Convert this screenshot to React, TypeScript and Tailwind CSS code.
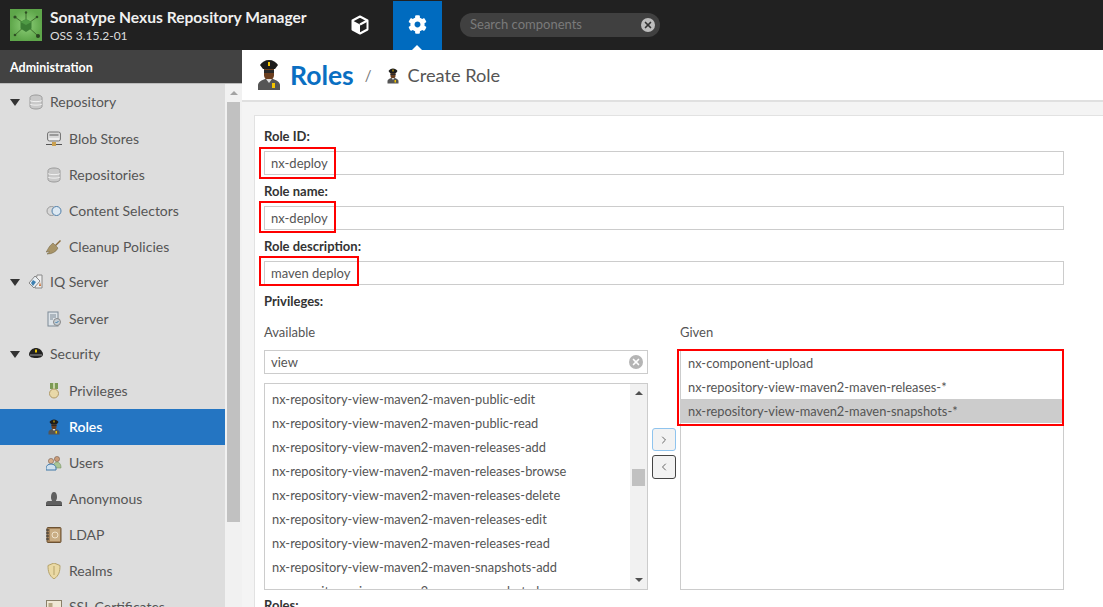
import React from "react";
import { ChevronLeft, ChevronRight, X } from "lucide-react";
import { FaCog } from "react-icons/fa";

const Db = ({ s = 16 }: { s?: number }) => (
  <svg width={s} height={s} viewBox="0 0 16 16">
    <path d="M2 3.500C2 2 5 1 8 1s6 1 6 2.500v9C14 14 11 15 8 15s-6-1-6-2.500z" fill="#c9c9c9" stroke="#9a9a9a" />
    <path d="M2 6.500C3 8 13 8 14 6.500M2 10C3 11.500 13 11.500 14 10" fill="none" stroke="#f2f2f2" />
  </svg>
);
const Officer = ({ s = 16 }: { s?: number }) => (
  <svg width={s} height={s} viewBox="0 0 24 32">
    <path d="M1 31v-5c0-3 4-5 7-6h8c3 1 7 3 7 6v5z" fill="#555" />
    <path d="M7 10h10v6c0 3-2 5-5 5s-5-2-5-5z" fill="#6b3f1f" />
    <path d="M7 11h10v3H7z" fill="#2a2a2a" />
    <path d="M3 6c2-3 5-5 9-5s7 2 9 5l-3 4H6z" fill="#1c1c1c" />
    <rect x="11" y="3" width="2" height="4" fill="#f2c400" />
    <rect x="15" y="24" width="3" height="5" fill="#f2c400" />
    <path d="M9 20h6l-3 4z" fill="#ddd" />
  </svg>
);
const Blob = () => (
  <svg width="16" height="16" viewBox="0 0 16 16">
    <rect x="1.500" y="1" width="13" height="9" rx="2" fill="#d8d8d8" stroke="#777" />
    <rect x="3.500" y="3" width="9" height="2" fill="#999" />
    <rect x="3" y="7" width="10" height="2" fill="#eee" />
    <path d="M0 13.500h16" stroke="#555" />
    <rect x="6" y="11" width="4" height="4" fill="#c9a050" />
  </svg>
);
const Selectors = () => (
  <svg width="16" height="16" viewBox="0 0 16 16">
    <circle cx="5.500" cy="8" r="4.500" fill="#d8d8d8" stroke="#999" />
    <circle cx="10.500" cy="8" r="4.500" fill="#dce8f2" stroke="#4f7ea8" />
  </svg>
);
const Broom = () => (
  <svg width="16" height="16" viewBox="0 0 16 16">
    <path d="M9 6l5-5 1 1-5 5z" fill="#8a6a3a" />
    <path d="M7 4l5 5c-2 4-6 6-11 6 2-1 2-2 2-3-1 1-2 1-3 1 2-2 2-5 7-9z" fill="#a89468" stroke="#6d6040" strokeWidth=".5" />
  </svg>
);
const Tags = () => (
  <svg width="16" height="16" viewBox="0 0 16 16">
    <path d="M9 1h5v13H7z" fill="#eee" stroke="#888" />
    <path d="M7 2l5 5-6 7-5-5z" fill="#e8eef2" stroke="#888" />
    <path d="M5 6l3 2-3 4-2-3z" fill="#3d7fb0" />
    <path d="M12 8l1 4h-2z" fill="#c86a2a" />
  </svg>
);
const ServerI = () => (
  <svg width="16" height="16" viewBox="0 0 16 16">
    <rect x="2" y="1" width="10" height="14" fill="#dde3e8" stroke="#7d8a96" />
    <path d="M4 4h6M4 6h6M4 8h3" stroke="#7d8a96" />
    <circle cx="11" cy="11" r="3.500" fill="#c5cdd3" stroke="#888" />
    <path d="M9.500 11l1 1 2-2" stroke="#3c7fb0" fill="none" />
  </svg>
);
const Hat = () => (
  <svg width="16" height="16" viewBox="0 0 16 16">
    <path d="M1 8c1-4 4-6 7-6s6 2 7 6c0 3-3 4-7 4s-7-1-7-4z" fill="#222" />
    <path d="M2 9h12" stroke="#999" />
    <rect x="7" y="3.500" width="2" height="3" fill="#e8c400" />
  </svg>
);
const Medal = () => (
  <svg width="16" height="16" viewBox="0 0 16 16">
    <rect x="4" y="0" width="8" height="6" fill="#7c9a55" />
    <rect x="7" y="0" width="2" height="6" fill="#c7d4a8" />
    <circle cx="8" cy="10.500" r="4.500" fill="#e8d8a8" stroke="#b09a68" />
  </svg>
);
const Users = () => (
  <svg width="16" height="16" viewBox="0 0 16 16">
    <circle cx="11" cy="4" r="2.600" fill="#c99b78" stroke="#6a5040" strokeWidth=".5" />
    <path d="M7 12c0-3 2-5 4-5s4 2 4 5v1H7z" fill="#a9c494" stroke="#6c8858" strokeWidth=".5" />
    <circle cx="5" cy="6" r="2.600" fill="#d6ad8b" stroke="#6a5040" strokeWidth=".5" />
    <path d="M0 15v-2c0-2 2-4 5-4s5 2 5 4v2z" fill="#cfe0ee" stroke="#3f78a8" />
  </svg>
);
const Anon = () => (
  <svg width="16" height="16" viewBox="0 0 16 16">
    <path d="M5 6c0-3 1-5 3-5s3 2 3 5-1 3-1 4h4c1 0 2 1 2 2v2H0v-2c0-1 1-2 2-2h4c0-1-1-1-1-4z" fill="#5f5f5f" />
    <rect x="0" y="14" width="16" height="1" fill="#444" />
  </svg>
);
const Book = () => (
  <svg width="16" height="16" viewBox="0 0 16 16">
    <rect x="1" y="0.500" width="14" height="15" rx="1" fill="#a5835a" stroke="#6c5233" />
    <rect x="4" y="2" width="10" height="12" fill="#c9ad84" />
    <circle cx="9" cy="8" r="3" fill="none" stroke="#f0e4cc" />
    <path d="M0 3h3M0 6h3M0 9h3M0 12h3" stroke="#333" />
  </svg>
);
const Shield = () => (
  <svg width="16" height="16" viewBox="0 0 16 16">
    <path d="M8 0l6 2.500c0 6-1 10-6 13.500C3 12.500 2 8.500 2 2.500z" fill="#ead9a4" stroke="#b5a26a" />
    <path d="M8 3v9" stroke="#b5a26a" />
  </svg>
);
const Cert = () => (
  <svg width="16" height="16" viewBox="0 0 16 16">
    <rect x="0.500" y="1.500" width="15" height="12" fill="#efe8d5" stroke="#8b8069" />
    <rect x="2.500" y="4" width="4" height="4" fill="#b7a884" />
  </svg>
);
const Logo = () => (
  <svg width="32" height="32" viewBox="0 0 32 32" className="shrink-0">
    <defs>
      <radialGradient id="lg">
        <stop offset="0" stopColor="#8fd07a" />
        <stop offset="1" stopColor="#5ea64a" />
      </radialGradient>
    </defs>
    <rect width="32" height="32" fill="url(#lg)" />
    <path d="M16 16L5 8M16 16L27 8M16 16L5 26M16 16L27 26M16 16V4" stroke="#3f6f2e" strokeWidth="1" />
    <circle cx="5" cy="8" r="1.600" fill="#2f4f24" />
    <circle cx="27" cy="8" r="1.300" fill="#2f4f24" />
    <circle cx="5" cy="26" r="1.300" fill="#2f4f24" />
    <circle cx="28" cy="27" r="2" fill="#2a4420" />
    <circle cx="16" cy="3.500" r="1.200" fill="#2f4f24" />
    <path d="M16 10l5.500 3v6.500L16 23l-5.500-3.500V13z" fill="#3b7d34" />
    <path d="M16 10l5.500 3-5.500 3-5.500-3z" fill="#4f9a45" />
  </svg>
);
const Cube = () => (
  <svg width="20" height="20" viewBox="0 0 20 20">
    <path d="M10 1.500l7.500 4v9l-7.500 4-7.500-4v-9z" fill="none" stroke="#fff" strokeWidth="2" strokeLinejoin="round" />
    <path d="M2.500 5.500l7.500 4v9l-7.500-4z" fill="#fff" />
    <path d="M10 9.500l7.500-4" stroke="#fff" strokeWidth="2" />
  </svg>
);

const Row = ({ icon, label, active }: { icon: React.ReactNode; label: string; active?: boolean }) => (
  <div className={`h-9 flex items-center pl-[46px] ${active ? "bg-[#2475c2] text-white font-semibold" : "text-[#555]"}`}>
    <span className="w-4 h-4 mr-[7px] flex items-center justify-center">{icon}</span>
    <span className="mb-[2px]">{label}</span>
  </div>
);
const Head = ({ icon, label }: { icon: React.ReactNode; label: string }) => (
  <div className="h-9 flex items-center pl-[10px] text-[#555]">
    <span className="w-0 h-0 border-x-[5px] border-x-transparent border-t-[7px] border-t-[#333] mr-[8px]" />
    <span className="w-4 h-4 mr-[6px] flex items-center justify-center">{icon}</span>
    <span className="mb-[2px]">{label}</span>
  </div>
);
const Field = ({ label, value, box }: { label: string; value: string; box: string }) => (
  <div className="h-[55px] flex flex-col">
    <div className="h-[21px] mb-1 flex items-center font-bold text-[#333] text-[13px]">{label}</div>
    <div className="relative h-6 w-[800px] border border-[#ccc] bg-white flex items-center pl-[6px] pt-[2px] text-[#555]">
      {value}
      <div className={box} />
    </div>
  </div>
);

const available = [
  "nx-repository-view-maven2-maven-public-edit",
  "nx-repository-view-maven2-maven-public-read",
  "nx-repository-view-maven2-maven-releases-add",
  "nx-repository-view-maven2-maven-releases-browse",
  "nx-repository-view-maven2-maven-releases-delete",
  "nx-repository-view-maven2-maven-releases-edit",
  "nx-repository-view-maven2-maven-releases-read",
  "nx-repository-view-maven2-maven-snapshots-add",
  "nx-repository-view-maven2-maven-snapshots-browse",
];

export default function App() {
  return (
    <div className="w-[1103px] h-[607px] overflow-hidden flex flex-col bg-white text-[13px] font-['Lato','Liberation_Sans',sans-serif]">
      <header className="h-[50px] shrink-0 bg-[#212121] flex items-stretch text-white">
        <div className="w-[350px] shrink-0 flex items-center pl-[10px]">
          <Logo />
          <div className="ml-2 pt-[2px]">
            <div className="text-[15.6px] font-bold leading-[18px] text-[#f0f0f0]">Sonatype Nexus Repository Manager</div>
            <div className="text-[12px] leading-[16px] mt-[2px] text-[#ddd]">OSS 3.15.2-01</div>
          </div>
        </div>
        <div className="w-[20px] flex items-center">
          <Cube />
        </div>
        <div className="relative w-[49px] ml-[23px] mt-px bg-[#006bbf] flex items-center justify-center">
          <FaCog size={19} className="text-white -mt-[2px]" />
          <span className="absolute bottom-0 left-[19px] w-0 h-0 border-x-[5px] border-x-transparent border-b-[5px] border-b-white" />
        </div>
        <div className="ml-[18px] mt-[13px] w-[200px] h-[24px] rounded-full bg-[#404040] flex items-center pl-[10px] pr-[5px] justify-between text-[13px] text-[#7a7a7a]">
          <span>Search components</span>
          <span className="w-[14px] h-[14px] rounded-full bg-[#bdbdbd] flex items-center justify-center text-[#333]">
            <X size={10} strokeWidth={4} />
          </span>
        </div>
      </header>
      <div className="flex-1 flex min-h-0">
        <aside className="w-[242px] shrink-0 flex flex-col min-h-0">
          <div className="h-[34px] shrink-0 bg-[#424242] border-b border-b-[#bbb] flex items-center pl-[10px] pt-[3px] text-white font-bold text-[12.5px]">Administration</div>
          <div className="flex-1 flex min-h-0 overflow-hidden">
            <nav className="w-[225px] bg-[#dddddd] text-[14px]">
              <Head icon={<Db />} label="Repository" />
              <div className="mt-px -mb-px">
                <Row icon={<Blob />} label="Blob Stores" />
                <Row icon={<Db />} label="Repositories" />
                <Row icon={<Selectors />} label="Content Selectors" />
                <Row icon={<Broom />} label="Cleanup Policies" />
              </div>
              <Head icon={<Tags />} label="IQ Server" />
              <div className="mt-px -mb-px">
                <Row icon={<ServerI />} label="Server" />
              </div>
              <Head icon={<Hat />} label="Security" />
              <div className="mt-px">
                <Row icon={<Medal />} label="Privileges" />
                <Row icon={<Officer />} label="Roles" active />
                <Row icon={<Users />} label="Users" />
                <Row icon={<Anon />} label="Anonymous" />
                <Row icon={<Book />} label="LDAP" />
                <Row icon={<Shield />} label="Realms" />
                <Row icon={<Cert />} label="SSL Certificates" />
              </div>
            </nav>
            <div className="w-[17px] bg-[#f1f1f1] flex flex-col items-center pt-[7px]">
              <span className="w-0 h-0 border-x-[4px] border-x-transparent border-b-[4px] border-b-[#a3a3a3]" />
              <div className="w-[13px] h-[420px] mt-[7px] bg-[#c1c1c1]" />
            </div>
          </div>
        </aside>
        <main className="flex-1 flex flex-col min-w-0 min-h-0">
          <div className="h-[52px] shrink-0 bg-white border-b-2 border-b-[#e0e0e0] flex items-center pl-[11px]">
            <Officer s={32} />
            <span className="ml-[5px] mt-[2px] text-[26.5px] font-bold text-[#0a6fc2]">Roles</span>
            <span className="ml-[11px] text-[#777] text-[15px]">/</span>
            <span className="ml-[13px] mt-px"><Officer s={16} /></span>
            <span className="ml-[7px] mt-[2px] text-[18.2px] text-[#555]">Create Role</span>
          </div>
          <div className="flex-1 bg-[#f4f4f4] pl-3 pt-[13px] min-h-0 overflow-hidden">
            <div className="bg-white border border-[#e2e2e2] border-r-0 pl-[9px] pt-[10px] h-[600px]">
              <Field label="Role ID:" value="nx-deploy" box="absolute -left-[6px] -top-[5px] w-[77px] h-[32px] border-2 border-[#ff0000]" />
              <Field label="Role name:" value="nx-deploy" box="absolute -left-[6px] -top-[6px] w-[77px] h-[32px] border-2 border-[#ff0000]" />
              <Field label="Role description:" value="maven deploy" box="absolute -left-[6px] -top-[6px] w-[100px] h-[30px] border-2 border-[#ff0000]" />
              <div className="h-[21px] flex items-center font-bold text-[#333]">Privileges:</div>
              <div className="flex mt-[11px] text-[#555]">
                <div className="w-[384px]">
                  <div className="h-[18px] leading-[18px]">Available</div>
                  <div className="mt-[9px] h-6 border border-[#ccc] flex items-center justify-between pl-[6px] pr-[4px]">
                    <span className="pt-[2px]">view</span>
                    <span className="w-[14px] h-[14px] rounded-full bg-[#b5b5b5] flex items-center justify-center text-white">
                      <X size={10} strokeWidth={4} />
                    </span>
                  </div>
                  <div className="mt-[9px] h-[207px] border border-[#ccc] flex overflow-hidden">
                    <div className="flex-1 pt-[3px] pl-[7px] overflow-hidden text-[12.85px]">
                      {available.map((t) => (
                        <div key={t} className="h-6 leading-6 whitespace-nowrap">{t}</div>
                      ))}
                    </div>
                    <div className="w-[17px] bg-[#f1f1f1] flex flex-col items-center justify-between py-[7px] relative">
                      <span className="w-0 h-0 border-x-[4px] border-x-transparent border-b-[4px] border-b-[#505050]" />
                      <div className="absolute top-[85px] left-[2px] w-[13px] h-[17px] bg-[#c1c1c1]" />
                      <span className="w-0 h-0 border-x-[4px] border-x-transparent border-t-[4px] border-t-[#505050]" />
                    </div>
                  </div>
                </div>
                <div className="w-[32px] pl-1 pt-[105px] flex flex-col gap-[4px]">
                  <div className="w-6 h-[23px] rounded-[3px] border border-[#8fc4ee] bg-[#f2f2f2] flex items-center justify-center text-[#666]"><ChevronRight size={12} /></div>
                  <div className="w-6 h-[24px] rounded-[3px] border border-[#444] bg-[#f2f2f2] flex items-center justify-center text-[#666]"><ChevronLeft size={12} /></div>
                </div>
                <div className="w-[384px]">
                  <div className="h-[18px] leading-[18px]">Given</div>
                  <div className="relative mt-[9px] h-[240px] border border-[#ccc] text-[12.85px]">
                    <div className="h-6 leading-6 pl-[7px]">nx-component-upload</div>
                    <div className="h-6 leading-6 pl-[7px]">nx-repository-view-maven2-maven-releases-*</div>
                    <div className="h-6 leading-6 pl-[7px] bg-[#cccccc]">nx-repository-view-maven2-maven-snapshots-*</div>
                    <div className="absolute -left-[4px] -top-[2px] w-[387px] h-[77px] border-2 border-[#ff0000]" />
                  </div>
                </div>
              </div>
              <div className="mt-[6px] font-bold text-[#333]">Roles:</div>
            </div>
          </div>
        </main>
      </div>
    </div>
  );
}
